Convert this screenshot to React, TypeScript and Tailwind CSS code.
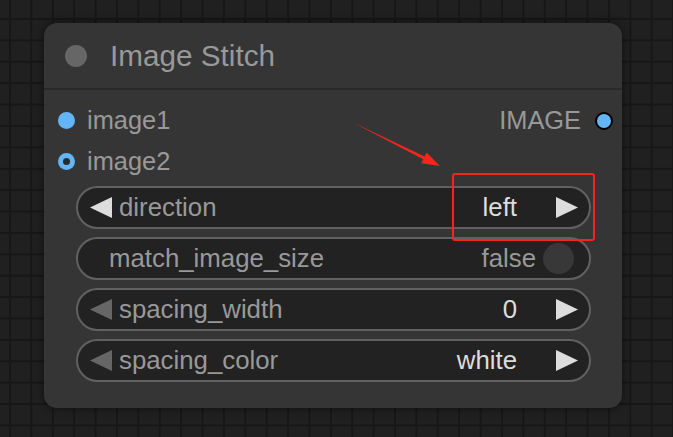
import React from "react";

const font = { fontFamily: '"Liberation Sans", Arial, sans-serif' };

function TriLeft({ color }: { color: string }) {
  return (
    <svg width="22" height="21" viewBox="0 0 22 21" className="shrink-0">
      <polygon points="22,0 22,21 0,10.5" fill={color} />
    </svg>
  );
}
function TriRight({ color }: { color: string }) {
  return (
    <svg width="22" height="21" viewBox="0 0 22 21" className="shrink-0">
      <polygon points="0,0 0,21 22,10.5" fill={color} />
    </svg>
  );
}

function ComboWidget({
  label,
  value,
  leftActive,
}: {
  label: string;
  value: string;
  leftActive: boolean;
}) {
  return (
    <div className="h-[43px] rounded-full border-2 border-[#616161] bg-[#222222] flex items-center pl-[12px] pr-[11px]">
      <TriLeft color={leftActive ? "#dddddd" : "#666666"} />
      <span className="ml-[7px] text-[25.8px] text-[#999999] leading-none">{label}</span>
      <span className="ml-auto text-[25.8px] text-[#dddddd] leading-none">{value}</span>
      <span className="ml-[39px]">
        <TriRight color="#dddddd" />
      </span>
    </div>
  );
}

export default function App() {
  return (
    <div
      className="relative w-[673px] h-[437px] overflow-hidden bg-[#202020] bg-[image:linear-gradient(to_right,#171717_2px,transparent_2px),linear-gradient(to_bottom,#171717_2px,transparent_2px)] bg-[size:21.4px_21.4px] bg-[position:9px_18px] pt-[23px] pl-[44px]"
      style={font}
    >
      <div className="w-[578px] h-[385px] rounded-[13px] bg-[#353535] shadow-[0_0_10px_rgba(0,0,0,0.55)] flex flex-col">
        <div className="h-[65px] flex items-center pl-[21px]">
          <div className="w-[22px] h-[22px] rounded-full bg-[#666666]" />
          <span className="ml-[23px] text-[29.7px] text-[#999999] leading-none">Image Stitch</span>
        </div>
        <div className="h-[2px] bg-[#2a2a2a]" />
        <div className="pt-[10px] flex flex-col">
          <div className="h-[41px] flex items-center pl-[14px] pr-[9px]">
            <div className="w-[17px] h-[17px] rounded-full bg-[#64b5f6]" />
            <span className="ml-[12px] text-[25.4px] text-[#999999] leading-none">image1</span>
            <span className="ml-auto text-[25.4px] text-[#999999] leading-none">IMAGE</span>
            <div className="ml-[14px] w-[18px] h-[18px] rounded-full bg-[#64b5f6] border-2 border-black" />
          </div>
          <div className="h-[41px] flex items-center pl-[14px]">
            <div className="w-[17px] h-[17px] rounded-full bg-[#64b5f6] flex items-center justify-center">
              <div className="w-[7px] h-[7px] rounded-full bg-[#2a2a2a]" />
            </div>
            <span className="ml-[12px] text-[25.4px] text-[#999999] leading-none">image2</span>
          </div>
        </div>
        <div className="mt-[4px] pl-[32px] pr-[31px] flex flex-col gap-[8px]">
          <ComboWidget label="direction" value="left" leftActive={true} />
          <div className="h-[43px] rounded-full border-2 border-[#616161] bg-[#222222] flex items-center pl-[31px] pr-[15px]">
            <span className="text-[25.8px] text-[#999999] leading-none">match_image_size</span>
            <span className="ml-auto text-[25.8px] text-[#999999] leading-none">false</span>
            <div className="ml-[7px] w-[31px] h-[31px] rounded-full bg-[#383838]" />
          </div>
          <ComboWidget label="spacing_width" value="0" leftActive={false} />
          <ComboWidget label="spacing_color" value="white" leftActive={false} />
        </div>
      </div>

      <div className="absolute left-[452px] top-[173px] w-[143px] h-[68px] border-2 border-[#f5251b] rounded-[3px]" />
      <svg className="absolute left-0 top-0" width="673" height="437" viewBox="0 0 673 437">
        <polygon
          points="352,122 424.6,156.6 426.6,152.6 440,166 421.2,163.3 423.2,159.3"
          fill="#f5251b"
        />
      </svg>
    </div>
  );
}
